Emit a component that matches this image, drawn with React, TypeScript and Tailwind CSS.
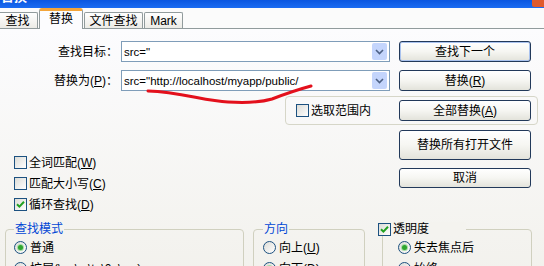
import React from "react";

const Checkbox = ({ checked = false }: { checked?: boolean }) => (
  <span className="flex h-[13px] w-[13px] shrink-0 items-center justify-center border border-[#1c5180] bg-gradient-to-br from-[#dcdcd7] to-white">
    {checked && (
      <svg width="9" height="9" viewBox="0 0 9 9">
        <path d="M1 4.2 L3.4 6.6 L8 1.8" fill="none" stroke="#21a121" strokeWidth="2" />
      </svg>
    )}
  </span>
);

const Radio = ({ checked = false }: { checked?: boolean }) => (
  <span className="flex h-[13px] w-[13px] shrink-0 items-center justify-center rounded-full border border-[#1c5180] bg-gradient-to-br from-[#dcdcd7] to-white">
    {checked && <span className="h-[5px] w-[5px] rounded-full bg-[#2fa52f] shadow-[0_0_0_1px_#a6dca6]" />}
  </span>
);

const Button = ({
  children,
  h = "h-[21px]",
  isDefault = false,
}: {
  children: React.ReactNode;
  h?: string;
  isDefault?: boolean;
}) => (
  <div
    className={`${h} flex w-[132px] shrink-0 items-center justify-center rounded-[3px] border border-[#22395a] bg-gradient-to-b from-white via-[#f6f6f2] to-[#e3e3db] ${
      isDefault ? "shadow-[inset_0_0_0_1px_#a9c2ee]" : ""
    }`}
  >
    {children}
  </div>
);

const Combo = ({ value }: { value: string }) => (
  <div className="ml-[3px] flex h-[21px] w-[269px] shrink-0 items-center border border-[#7f9db9] bg-white">
    <span className="flex-1 truncate pl-[2px] text-[11.5px]">{value}</span>
    <span className="mr-[2px] flex h-[17px] w-[15px] items-center justify-center rounded-[2px] bg-[#c4d5fc]">
      <svg width="9" height="6" viewBox="0 0 9 6">
        <path d="M1 1 L4.5 4.5 L8 1" fill="none" stroke="#4d6185" strokeWidth="1.6" />
      </svg>
    </span>
  </div>
);

const Tab = ({ label, active = false, w }: { label: string; active?: boolean; w: string }) =>
  active ? (
    <div
      className={`${w} relative z-10 -mb-px flex h-[21px] items-start justify-center rounded-t-[3px] border-x border-t-[3px] border-x-[#919b9c] border-t-[#f3a53a] bg-[#fcfcfe] pt-[1px]`}
    >
      {label}
    </div>
  ) : (
    <div
      className={`${w} flex h-[16px] items-center justify-center rounded-t-[2px] border-x border-t border-[#919b9c] bg-gradient-to-b from-white to-[#ecebe6]`}
    >
      {label}
    </div>
  );

export default function App() {
  return (
    <div className="relative flex h-[266px] w-[544px] flex-col overflow-hidden bg-[#fbfbfb] font-['Liberation_Sans','Noto_Sans_CJK_SC',sans-serif] text-[12px] leading-[14px] text-black">
      {/* title bar */}
      <div className="flex h-[8px] shrink-0 justify-between overflow-hidden bg-gradient-to-b from-[#0a56e0] to-[#1b6cf2]">
        <span className="-mt-[11px] pl-[1px] text-[13px] font-bold leading-[16px] text-white">替换</span>
        <span className="h-[7px] w-[12px] rounded-bl-[2px] bg-[#e05a2c]" />
      </div>

      {/* tabs */}
      <div className="flex h-[21px] shrink-0 items-end border-b border-[#919b9c] pl-0">
        <div className="-ml-[3px] flex items-end gap-[1px]">
          <Tab label="查找" w="w-[41px]" />
          <Tab label="替换" active w="w-[44px]" />
          <Tab label="文件查找" w="w-[59px]" />
          <Tab label="Mark" w="w-[39px]" />
        </div>
      </div>

      {/* tab body */}
      <div className="flex-1 bg-gradient-to-b from-[#fcfcfe] to-[#f2f1ec] pt-[12px]">
        <div className="flex h-[21px] items-center">
          <span className="w-[118px] text-right">查找目标：</span>
          <Combo value={'src="'} />
          <div className="ml-[9px]">
            <Button isDefault>查找下一个</Button>
          </div>
        </div>

        <div className="mt-[8px] flex h-[21px] items-center">
          <span className="w-[118px] text-right">
            替换为(<u>P</u>)：
          </span>
          <Combo value={'src="http://localhost/myapp/public/'} />
          <div className="ml-[9px]">
            <Button>
              替换(<u>R</u>)
            </Button>
          </div>
        </div>

        <div className="ml-[285px] mt-[5px] flex h-[29px] w-[253px] items-center rounded-[4px] border border-[#d6d6c8]">
          <div className="flex w-[113px] items-center gap-[2px] pl-[10px]">
            <Checkbox />
            <span>选取范围内</span>
          </div>
          <Button>
            全部替换(<u>A</u>)
          </Button>
        </div>

        <div className="mt-[5px] flex">
          <div className="w-[399px] pl-[14px] pt-[22px]">
            <div className="flex h-[21px] items-center gap-[2px]">
              <Checkbox />
              <span>
                全词匹配(<u>W</u>)
              </span>
            </div>
            <div className="flex h-[21px] items-center gap-[2px]">
              <Checkbox />
              <span>
                匹配大小写(<u>C</u>)
              </span>
            </div>
            <div className="flex h-[21px] items-center gap-[2px]">
              <Checkbox checked />
              <span>
                循环查找(<u>D</u>)
              </span>
            </div>
          </div>
          <div className="flex flex-col gap-[8px]">
            <Button h="h-[30px]">替换所有打开文件</Button>
            <Button h="h-[20px]">取消</Button>
          </div>
        </div>

        <div className="mt-[7px] flex items-start">
          <fieldset className="ml-[5px] h-[60px] w-[239px] rounded-[4px] border border-[#d0d0bf] pl-[8px]">
            <legend className="px-[1px] text-[#0046d5]">查找模式</legend>
            <div className="pt-[1px]">
              <div className="flex h-[21px] items-center gap-[3px]">
                <Radio checked />
                <span>普通</span>
              </div>
              <div className="flex h-[21px] items-center gap-[3px]">
                <Radio />
                <span>扩展(\n, \r, \t, \0, \x...)</span>
              </div>
            </div>
          </fieldset>

          <fieldset className="ml-[9px] h-[60px] w-[112px] rounded-[4px] border border-[#d0d0bf] pl-[9px]">
            <legend className="px-[1px] text-[#0046d5]">方向</legend>
            <div className="pt-[1px]">
              <div className="flex h-[21px] items-center gap-[3px]">
                <Radio />
                <span>
                  向上(<u>U</u>)
                </span>
              </div>
              <div className="flex h-[21px] items-center gap-[3px]">
                <Radio checked />
                <span>
                  向下(<u>D</u>)
                </span>
              </div>
            </div>
          </fieldset>

          <fieldset className="ml-[17px] h-[60px] w-[150px] rounded-[4px] border border-[#d0d0bf] pl-[15px]">
            <legend className="-ml-[20px] flex w-[88px] items-center gap-[2px] bg-[#f4f3ef]">
              <Checkbox checked />
              <span>透明度</span>
            </legend>
            <div className="pt-[1px]">
              <div className="flex h-[21px] items-center gap-[3px]">
                <Radio checked />
                <span>失去焦点后</span>
              </div>
              <div className="flex h-[21px] items-center gap-[3px]">
                <Radio />
                <span>始终</span>
              </div>
            </div>
          </fieldset>
        </div>
      </div>

      {/* red hand-drawn underline */}
      <svg className="pointer-events-none absolute left-0 top-0" width="544" height="266">
        <path
          d="M148 91 C 180 92, 205 101, 228 102 C 245 103, 262 102, 272 99 C 285 94, 300 89, 311 86"
          fill="none"
          stroke="#e3101c"
          strokeWidth="3"
          strokeLinecap="round"
        />
      </svg>
    </div>
  );
}
